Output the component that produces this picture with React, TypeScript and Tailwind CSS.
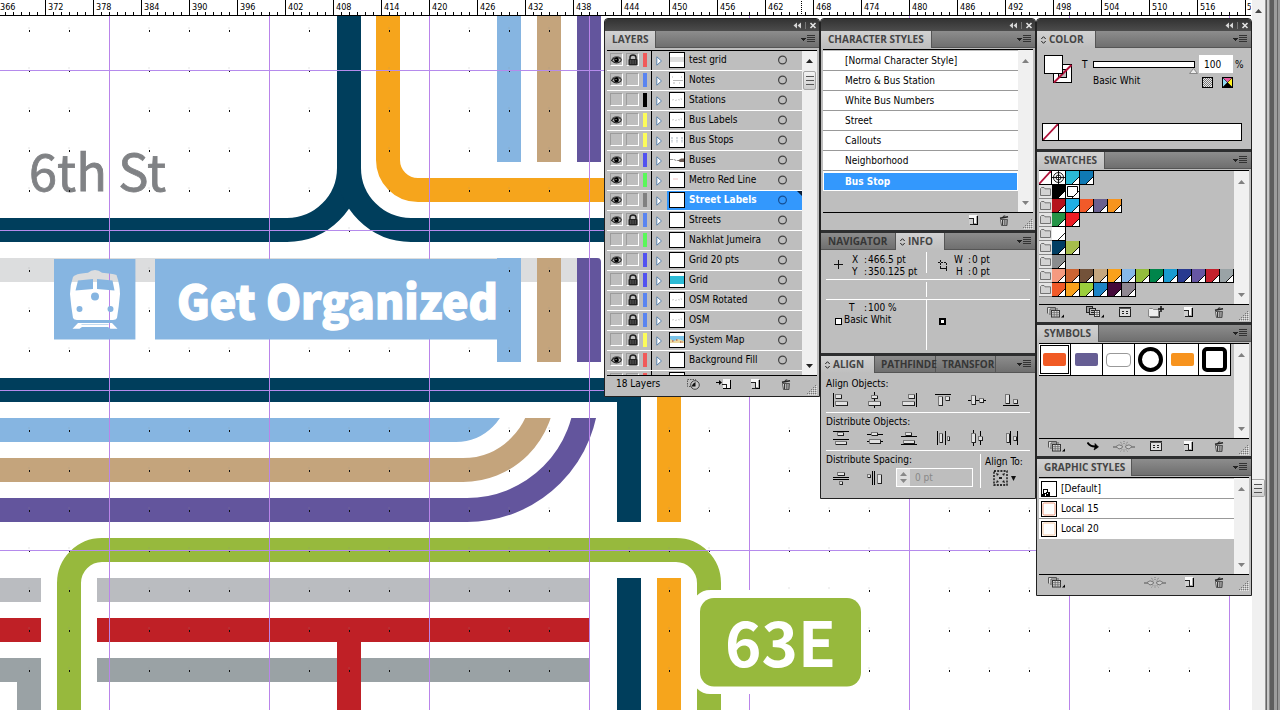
import React from "react";

const UI = "font-['DejaVu_Sans_Condensed','DejaVu_Sans',sans-serif] text-[10px]";

/* ---------- Ruler ---------- */

const majors = Array.from({ length: 27 }, (_, i) => ({ x: -3 + i * 48, n: 366 + i * 6 }));

function Ruler() {
  return (
    <div className="relative h-4 w-[1251px] shrink-0 overflow-hidden bg-white">
      <svg width="1251" height="16" shapeRendering="crispEdges" className="block">
        {Array.from({ length: 156 }, (_, i) => (
          <rect key={i} x={5 + i * 8} y="12" width="1" height="3" fill="#000" />
        ))}
        {majors.map((m) => (
          <rect key={m.n} x={m.x} y="0" width="1" height="15" fill="#000" />
        ))}
        <rect x="0" y="15" width="1251" height="1" fill="#000" />
        <line x1="801.5" x2="801.5" y1="1" y2="15" stroke="#000" strokeDasharray="1 1" />
      </svg>
      <svg width="1251" height="16" className="absolute left-0 top-0">
        {majors.slice(0, 26).map((m) => (
          <text key={m.n} x={m.x + 3} y="10" fontSize="9.5" textLength="15.5" lengthAdjust="spacingAndGlyphs" fontFamily="DejaVu Sans Condensed, DejaVu Sans, sans-serif">
            {m.n}
          </text>
        ))}
        <text x="1247" y="10" fontSize="9.5" textLength="4.5" lengthAdjust="spacingAndGlyphs" fontFamily="DejaVu Sans Condensed, DejaVu Sans, sans-serif">
          5
        </text>
      </svg>
    </div>
  );
}

/* ---------- Map artwork ---------- */

const NAVY = "#003e5c";
const ORANGE = "#f6a51c";
const SKY = "#86b5e1";
const TAN = "#c4a47c";
const PURPLE = "#63559d";
const GREEN = "#97b93d";
const RED = "#bf2026";
const guideX = [109, 269, 429, 589, 749, 909, 1069, 1229];
const guideY = [70, 230, 390, 550];
const dotX = Array.from({ length: 32 }, (_, i) => 29 + i * 40).filter((x) => !guideX.includes(x));
const dotY = Array.from({ length: 17 }, (_, i) => 30 + i * 40);
const MAPFONT = "Noto Sans CJK SC, Noto Sans CJK JP, sans-serif";

function Artwork() {
  return (
    <svg width="1252" height="694" viewBox="0 16 1252 694" className="block shrink-0">
      <defs>
        <clipPath id="below">
          <rect x="0" y="418" width="700" height="120" />
        </clipPath>
      </defs>
      <g shapeRendering="crispEdges">
        <rect x="0" y="258" width="600" height="24" fill="#dcddde" />
        <rect x="497" y="16" width="24" height="146" fill={SKY} />
        <rect x="537" y="16" width="24" height="146" fill={TAN} />
        <rect x="577" y="16" width="24" height="146" fill={PURPLE} />
        <rect x="497" y="258" width="24" height="104" fill={SKY} />
        <rect x="537" y="258" width="24" height="104" fill={TAN} />
        <rect x="657" y="380" width="24" height="142" fill={ORANGE} />
        <rect x="657" y="578" width="24" height="132" fill={ORANGE} />
        <rect x="0" y="578" width="41" height="24" fill="#babcc0" />
        <rect x="97" y="578" width="492" height="24" fill="#babcc0" />
        <rect x="0" y="658" width="41" height="24" fill="#9aa2a5" />
        <rect x="17" y="682" width="24" height="28" fill="#9aa2a5" />
        <rect x="97" y="658" width="492" height="24" fill="#9aa2a5" />
        <rect x="0" y="618" width="41" height="24" fill={RED} />
        <rect x="97" y="618" width="492" height="24" fill={RED} />
        <rect x="337" y="642" width="24" height="68" fill={RED} />
      </g>
      <path d="M577 258H597Q601 258 601 262V362H577Z" fill={PURPLE} />
      <g fill="none" strokeWidth="24">
        <path d="M388 16V160A30 30 0 0 0 418 190H606" stroke={ORANGE} />
        <g clipPath="url(#below)">
          <path d="M0 430H456A40 40 0 0 0 496 390" stroke={SKY} />
          <path d="M0 470H463A80 80 0 0 0 543 390" stroke={TAN} />
          <path d="M0 510H467A120 120 0 0 0 587 390" stroke={PURPLE} />
        </g>
        <path d="M69 710V583A33 33 0 0 1 102 550H676A33 33 0 0 1 709 583V710" stroke={GREEN} />
      </g>
      <text x="29" y="190.500" fontFamily={MAPFONT} fontSize="50" fontWeight="400" fill="#808285" stroke="#808285" strokeWidth="0.8" textLength="137" lengthAdjust="spacingAndGlyphs">
        6th St
      </text>
      <g shapeRendering="crispEdges">
        {dotY.map((y) =>
          dotX.map((x) => (
            <React.Fragment key={x + "-" + y}>
              <rect x={x} y={y} width="1" height="2" fill="#111" />
              <rect x={x - 1} y={y - 3} width="2" height="2" fill="#888" opacity="0.12" />
            </React.Fragment>
          ))
        )}
      </g>
      <g fill="none" stroke={NAVY} strokeWidth="24">
        <path d="M349 16V168A62 62 0 0 1 287 230H0" />
        <path d="M349 16V168A62 62 0 0 0 411 230H606" />
        <path d="M0 390H629V522" />
        <path d="M629 578V710" />
      </g>
      <rect x="349" y="230" width="1" height="2" fill="#111" />
      <g shapeRendering="crispEdges">
        {guideX.map((x) => (
          <rect key={x} x={x} y="16" width="1" height="694" fill="#ba84ea" />
        ))}
        {guideY.map((y) => (
          <rect key={y} x="0" y={y} width="1252" height="1" fill="#b58bec" />
        ))}
      </g>
      <path
        fill={SKY}
        fillRule="evenodd"
        d="M54 259H135.4V339.5H54Z M76 275Q78 273.500 88 272.800Q91 270 95 270Q99 270 102 272.800Q112 273.500 116.500 275Q120 285 120 294Q119 306 117 318Q116 320 113 320H77Q74 320 73 318Q71 306 70 294Q70 285 73 277Q74 275.500 76 275Z M78 280.500L93 279V289L75.500 290.500Z M97 279L112.500 280.500L114.500 290.500L97 289Z M91 296.500a4 4 0 1 0 8 0a4 4 0 1 0-8 0Z M76.500 309a3 3 0 1 0 6 0a3 3 0 1 0-6 0Z M107.500 309a3 3 0 1 0 6 0a3 3 0 1 0-6 0Z M78 323H112L117.500 328.800H110.500L108 327H82L79.500 328.800H72.500Z M81.500 324H108.500V324.600H81.500Z"
      />
      <rect x="155" y="259" width="344" height="80.500" fill={SKY} />
      <text x="177" y="319.300" fontFamily={MAPFONT} fontSize="46" fontWeight="900" fill="#fff" stroke="#fff" strokeWidth="1.3" textLength="321" lengthAdjust="spacingAndGlyphs">
        Get Organized
      </text>
      <rect x="692" y="590" width="176" height="104" rx="18" fill="#fff" />
      <rect x="700" y="598" width="161" height="88.500" rx="14" fill={GREEN} />
      <text x="725" y="667" fontFamily={MAPFONT} fontSize="62" fontWeight="700" fill="#fff" textLength="111" lengthAdjust="spacingAndGlyphs">
        63E
      </text>
    </svg>
  );
}

/* ---------- Window scroll bar ---------- */

function WindowEdge() {
  return (
    <div className="flex w-[28px] shrink-0">
      <div className="flex w-[13px] flex-col items-center bg-[#f0f0f0] pt-[9px]">
        <svg width="7" height="4" className="block">
          <path d="M3.500 0L7 4H0Z" fill="#444" />
        </svg>
        <div className="mt-[466px] flex h-[18px] w-[13px] flex-col items-center justify-center gap-[3px] rounded-r-[2px] border border-l-0 border-[#a5a5a5] bg-gradient-to-b from-[#f6f6f6] to-[#cfcfcf]">
          <div className="h-px w-[8px] bg-[#555]" />
          <div className="h-px w-[8px] bg-[#555]" />
          <div className="h-px w-[8px] bg-[#555]" />
        </div>
      </div>
      <div className="w-px bg-[#999]" />
      <div className="w-px bg-[#666]" />
      <div className="w-[2px] bg-[#c8c8c8]" />
      <div className="w-px bg-[#8a8a8a]" />
      <div className="w-[4px] bg-[#5e5e5e]" />
      <div className="w-[3px] bg-[#9c9c9c]" />
      <div className="w-px bg-[#666]" />
      <div className="w-[2px] bg-[#999]" />
    </div>
  );
}

/* ---------- Panel chrome ---------- */

function TitleBar() {
  return (
    <div className="flex h-[12px] shrink-0 items-center justify-end bg-gradient-to-b from-[#333] to-[#4c4c4c] pr-px">
      <svg width="26" height="9" viewBox="0 0 26 9" className="block">
        <path d="M4 1.500V7.500L0.500 4.500ZM8 1.500V7.500L4.500 4.500Z" fill="#d5d5d5" transform="translate(1 0)" />
        <path d="M13.500 1V8" stroke="#777" strokeWidth="1" />
        <path d="M18.500 2L23.500 7M23.500 2L18.500 7" stroke="#e2e2e2" strokeWidth="1.600" />
      </svg>
    </div>
  );
}

type Tab = { label: string; w: string; active?: boolean; arrow?: boolean };

function TabBar({ tabs }: { tabs: Tab[] }) {
  return (
    <div className="flex h-[17px] shrink-0 border-b border-[#555] bg-gradient-to-b from-[#8d8d8d] to-[#6f6f6f]">
      {tabs.map((t) => (
        <div
          key={t.label}
          className={
            "flex h-[17px] shrink-0 items-center whitespace-nowrap border-r border-[#555] font-['Open_Sans','Noto_Sans',sans-serif] text-[10px] font-bold leading-[17px] " +
            (t.active ? "bg-gradient-to-b from-[#d2d2d2] to-[#bebebe] text-[#444] " : "text-[#363636] ") +
            (t.arrow ? "pl-[4px] " : "") +
            t.w
          }
        >
          {t.arrow && (
            <svg width="5" height="8" viewBox="0 0 5 8" className="mr-[3px] block shrink-0">
              <path d="M0.300 3L2.500 0.700L4.700 3M0.300 5L2.500 7.300L4.700 5" fill="none" stroke="#222" />
            </svg>
          )}
          <span>{t.label}</span>
        </div>
      ))}
      <div className="flex flex-1 items-center justify-end pr-[4px]">
        <svg width="14" height="8" viewBox="0 0 14 8" className="block" shapeRendering="crispEdges">
          <path d="M0 3H5L2.500 6Z" fill="#222" />
          <path d="M6 0.500H14M6 2.500H14M6 4.500H14M6 6.500H14" stroke="#333" />
        </svg>
      </div>
    </div>
  );
}

function Divider() {
  return <div className="h-[3px] shrink-0 bg-[#2d2e2f]" />;
}

function Scroll({ active }: { active?: boolean }) {
  const c = active ? "#222" : "#808080";
  return (
    <div className={"flex w-[15px] shrink-0 flex-col items-center bg-[#f0f0f0] " + (active ? "pb-[7px] pt-[8px]" : "pb-[7px] pt-[9px]")}>
      <svg width="7" height="4" className="block">
        <path d="M3.500 0L7 4H0Z" fill={c} />
      </svg>
      {active && (
        <div className="mt-[8px] flex h-[19px] w-[13px] shrink-0 flex-col items-center justify-center gap-[3px] rounded-[2px] border border-[#a5a5a5] bg-gradient-to-b from-[#f4f4f4] to-[#cccccc]">
          <div className="h-px w-[8px] bg-[#555]" />
          <div className="h-px w-[8px] bg-[#555]" />
          <div className="h-px w-[8px] bg-[#555]" />
        </div>
      )}
      <div className="flex-1" />
      <svg width="7" height="4" className="block">
        <path d="M0 0H7L3.500 4Z" fill={c} />
      </svg>
    </div>
  );
}

/* ---------- Footer glyphs ---------- */

function NewGlyph() {
  return (
    <svg width="10" height="10" viewBox="0 0 10 10" shapeRendering="crispEdges" className="block">
      <rect x="1" y="0" width="8" height="9" fill="#fafafa" />
      <path d="M9.500 1V9.500H3" fill="none" stroke="#000" />
      <path d="M8.500 1V8.500H5" fill="none" stroke="#aaa" />
      <rect x="1" y="4" width="4" height="5" fill="#d0d0d0" />
      <path d="M1 3.500H5.500V9.500H2" fill="none" stroke="#222" />
    </svg>
  );
}
function TrashGlyph() {
  return (
    <svg width="10" height="11" viewBox="0 0 10 11" className="block">
      <path d="M1 3.200L9 1.700" stroke="#222" strokeWidth="1.500" />
      <path d="M3.800 1.500L6.200 0.800" stroke="#222" />
      <path d="M1.500 4.500H8.500L8 10.500H2.500Z" fill="#eee" stroke="#333" strokeWidth="0.800" />
      <path d="M3.500 5V10M5.200 5V10M7 5V10" stroke="#222" strokeWidth="0.900" />
    </svg>
  );
}
function GripGlyph() {
  const pts: number[][] = [];
  for (let r = 0; r < 5; r++) for (let c = 4 - r; c < 5; c++) pts.push([c * 2, r * 2]);
  return (
    <svg width="10" height="10" shapeRendering="crispEdges" className="block">
      {pts.map(([x, y]) => (
        <React.Fragment key={x + "." + y}>
          <rect x={x} y={y} width="1" height="1" fill="#777" />
          <rect x={x + 1} y={y + 1} width="1" height="1" fill="#e6e6e6" />
        </React.Fragment>
      ))}
    </svg>
  );
}
function LibraryGlyph() {
  return (
    <svg width="18" height="12" viewBox="0 0 18 12" className="block">
      <path d="M0.500 7.500V1.500H8.500V4M3 9V3H11" fill="#ddd" stroke="#555" />
      <rect x="4.500" y="4.500" width="8" height="6.500" fill="#ddd" stroke="#333" />
      <path d="M4.500 6.700H12.500M4.500 8.800H12.500M7.200 4.500V11M9.900 4.500V11" stroke="#666" strokeWidth="0.800" />
      <path d="M17 8.500V11.500H14Z" fill="#000" />
    </svg>
  );
}
function KindGlyph() {
  return (
    <svg width="19" height="12" viewBox="0 0 19 12" className="block">
      <rect x="0.500" y="0.500" width="6" height="6" fill="#999" stroke="#222" />
      <rect x="3.500" y="2.500" width="6" height="6" fill="#bbb" stroke="#222" />
      <path d="M5 4.500H10M5 6.500H10" stroke="#222" />
      <rect x="8.500" y="4.500" width="5" height="6" fill="#eee" stroke="#333" />
      <path d="M9 6.500H13M9 8.500H13M11 5V10" stroke="#555" strokeWidth="0.700" />
      <path d="M18 8.500V11.500H15Z" fill="#000" />
    </svg>
  );
}
function OptionsGlyph() {
  return (
    <svg width="12" height="10" viewBox="0 0 12 10" shapeRendering="crispEdges" className="block">
      <rect x="0.500" y="0.500" width="11" height="9" fill="#ddd" stroke="#222" />
      <path d="M0 1.500H12" stroke="#555" />
      <path d="M3 4.500H5M7 4.500H9M3 6.500H5M7 6.500H9" stroke="#222" />
    </svg>
  );
}
function FolderPlusGlyph() {
  return (
    <svg width="16" height="12" viewBox="0 0 16 12" className="block">
      <path d="M0.500 10.500V3.500L1.500 2.500H4.500L5.500 3.500H10.500V10.500Z" fill="#eee" stroke="#888" />
      <path d="M11.500 5V11.300H2" fill="none" stroke="#333" />
      <path d="M13 0V6M10 3H16" stroke="#111" strokeWidth="1.500" />
    </svg>
  );
}
function BreakGlyph() {
  return (
    <svg width="22" height="12" viewBox="0 0 22 12" className="block">
      <path d="M0 7H4M18 7H22" stroke="#777" strokeWidth="1.500" />
      <path d="M3 6.500L6 4.800L9.500 6L9 8L6 9Z" fill="#ccc" stroke="#777" />
      <path d="M19 6.500L16 4.800L12.500 6L13 8L16 9Z" fill="#ccc" stroke="#777" />
      <path d="M9 4.500L7 1M11 4V0.500M13 4.500L15 1M9 9.500L7.500 11.500M11 9.500V12M13 9.500L14.500 11.500" stroke="#777" strokeDasharray="1 1" />
    </svg>
  );
}
function PlaceGlyph() {
  return (
    <svg width="12" height="9" viewBox="0 0 12 9" className="block">
      <path d="M0.500 0.500Q3 4.500 8 4.500" fill="none" stroke="#000" strokeWidth="1.800" />
      <path d="M8 1.500L11.500 5L7 8L8 4.800Z" fill="#000" stroke="#000" strokeWidth="0.600" />
    </svg>
  );
}
function MaskGlyph() {
  return (
    <svg width="13" height="11" viewBox="0 0 13 11" className="block">
      <rect x="0.500" y="0.500" width="8" height="7" fill="none" stroke="#555" strokeDasharray="1.500 1" />
      <circle cx="8" cy="6" r="4.300" fill="#c8c8c8" stroke="#444" />
      <path d="M8.500 3V7.500H4.500Q5.500 4 8.500 3Z" fill="#111" />
    </svg>
  );
}
function SubLayerGlyph() {
  return (
    <svg width="15" height="10" viewBox="0 0 15 10" className="block">
      <path d="M0 3.500H4" stroke="#000" />
      <path d="M3 1L6 3.500L3 6Z" fill="#000" />
      <g shapeRendering="crispEdges">
        <rect x="7" y="0" width="7" height="9" fill="#f6f6f6" />
        <path d="M14.500 1V9.500H7" fill="none" stroke="#000" />
        <path d="M6 5.500H10.500V9" fill="none" stroke="#222" />
      </g>
    </svg>
  );
}

/* ---------- Layers ---------- */

type Layer = { name: string; eye?: boolean; lock?: boolean; color: string; art?: string; sel?: boolean };
const layers: Layer[] = [
  { name: "test grid", eye: true, lock: true, color: "bg-[#f15a5a]", art: "band" },
  { name: "Notes", eye: true, color: "bg-[#5a84f1]", art: "notes" },
  { name: "Stations", color: "bg-black", art: "faint" },
  { name: "Bus Labels", eye: true, color: "bg-[#fcfc5a]", art: "faint" },
  { name: "Bus Stops", color: "bg-[#fcfc5a]", art: "stops" },
  { name: "Buses", eye: true, color: "bg-[#5252f0]", art: "buses" },
  { name: "Metro Red Line", eye: true, color: "bg-[#5af85a]", art: "red" },
  { name: "Street Labels", eye: true, color: "bg-[#808080]", sel: true },
  { name: "Streets", eye: true, lock: true, color: "bg-[#5a84f1]" },
  { name: "Nakhlat Jumeira", color: "bg-[#5af85a]" },
  { name: "Grid 20 pts", eye: true, color: "bg-[#5252f0]" },
  { name: "Grid", lock: true, color: "bg-[#5252f0]", art: "grid" },
  { name: "OSM Rotated", lock: true, color: "bg-[#5a84f1]", art: "faint" },
  { name: "OSM", lock: true, color: "bg-[#5a84f1]", art: "faint" },
  { name: "System Map", lock: true, color: "bg-[#fcfc5a]", art: "map" },
  { name: "Background Fill", eye: true, lock: true, color: "bg-[#f15a5a]" },
  { name: "", color: "bg-[#f15a5a]" },
];

function Thumb({ art }: { art?: string }) {
  return (
    <svg width="16" height="16" viewBox="0 0 16 16" className="block shrink-0">
      <rect x="0.500" y="0.500" width="15" height="15" fill="#fff" stroke="#000" />
      {art === "band" && <rect x="1" y="5" width="14" height="5" fill="#dedede" />}
      {art === "notes" && <path d="M3 5H4M4 8.500H14M4 11H6M10 11H11M12 5H13" stroke="#888" strokeWidth="0.600" />}
      {art === "faint" && <path d="M3 8L5 7.500M6 8.500L8 8M9 7.500L11 8M12 6L12.500 8" fill="none" stroke="#bbb" strokeWidth="0.700" />}
      {art === "stops" && <path d="M3 5V11M8 5V11M13 5V11" stroke="#b5bfc9" strokeWidth="1.200" strokeDasharray="2 0.700" />}
      {art === "buses" && (
        <g>
          <path d="M1 7.500H5L7 8.500H11" fill="none" stroke="#888" strokeWidth="0.900" strokeDasharray="3 0.600" />
          <path d="M9 8.500L12 6.500H15V10H11Z" fill="#6b5a52" />
        </g>
      )}
      {art === "red" && <path d="M4 7H9" stroke="#efb5b5" strokeWidth="0.800" />}
      {art === "grid" && <rect x="1" y="4" width="14" height="8" fill="#2cbbd6" />}
      {art === "map" && (
        <g>
          <rect x="1" y="4" width="14" height="5" fill="#7cc4e8" />
          <path d="M1 7L5 9L9 7L15 9V11H1Z" fill="#ecd9a0" />
          <path d="M3 9H5M7 8H9M11 10H14" stroke="#b0402c" strokeWidth="1.200" strokeDasharray="1 0.500" />
        </g>
      )}
    </svg>
  );
}

function Eye() {
  return (
    <svg width="12" height="10" viewBox="0 0 12 10" className="block">
      <path d="M0.500 5.500Q5.500 0 11 4Q11.500 5 10.500 6.500Q5.500 10.500 0.500 5.500Z" fill="#bbb" stroke="#222" strokeWidth="1.100" />
      <path d="M1 3.500Q6 -0.500 11 3" fill="none" stroke="#333" strokeWidth="0.900" />
      <circle cx="6" cy="5" r="2.600" fill="#000" />
      <circle cx="5.500" cy="4.500" r="0.600" fill="#ddd" />
    </svg>
  );
}

function Lock() {
  return (
    <svg width="10" height="12" viewBox="0 0 10 12" className="block">
      <path d="M2 6V3.500Q2 1 5 1Q8 1 8 3.500V6" fill="none" stroke="#222" strokeWidth="1.500" />
      <rect x="0.500" y="5" width="9" height="6.500" rx="1" fill="#222" />
      <path d="M2 7H8M2 9H8" stroke="#888" strokeWidth="0.800" strokeDasharray="1.500 0.800" />
    </svg>
  );
}

function Cell({ children }: { children?: React.ReactNode }) {
  return (
    <div className="flex h-[13px] w-[13px] shrink-0 items-center justify-center border border-b-white border-l-[#9c9c9c] border-r-white border-t-[#9c9c9c]">
      {children}
    </div>
  );
}

function LayerRow({ l }: { l: Layer }) {
  return (
    <div className="flex h-[20px] shrink-0 border-b border-white bg-[#bebebe]">
      <div className="flex w-[45px] shrink-0 border-r border-black pl-[3px] pt-[2px]">
        <Cell>{l.eye && <Eye />}</Cell>
        <div className="w-[3px]" />
        <Cell>{l.lock && <Lock />}</Cell>
        <div className={"ml-[4px] h-[14px] w-[4px] " + l.color} />
      </div>
      <div className="flex w-[15px] shrink-0 items-center pl-[4px]">
        <svg width="7" height="10" viewBox="0 0 7 10" className="block">
          <path d="M0.800 0.800L5.500 5L0.800 9.200Z" fill="#fff" stroke="#5b84ad" strokeWidth="1" />
        </svg>
      </div>
      <div className={"relative flex flex-1 items-start pl-[2px] pt-px " + (l.sel ? "bg-[#3398fd] font-bold text-white" : "text-black")}>
        <Thumb art={l.art} />
        <span className="ml-[4px] w-[88px] whitespace-nowrap leading-[16px]">{l.name}</span>
        <svg width="10" height="10" viewBox="0 0 10 10" className="mt-[3px] block">
          <circle cx="5.500" cy="5" r="3.900" fill="none" stroke={l.sel ? "#144e94" : "#444"} strokeWidth="1.200" />
        </svg>
        {l.sel && (
          <svg width="5" height="5" className="absolute right-0 top-0">
            <path d="M0 0H5V5Z" fill="#0b1c33" />
          </svg>
        )}
      </div>
    </div>
  );
}

function LayersPanel() {
  return (
    <div className={"absolute left-[604px] top-[18px] flex h-[379px] w-[216px] flex-col overflow-hidden rounded-t-[4px] border border-[#222] bg-[#bebebe] " + UI}>
      <TitleBar />
      <TabBar tabs={[{ label: "LAYERS", w: "w-[51px] pl-[7px]", active: true }]} />
      <div className="mx-[2px] mt-[2px] flex h-[326px] shrink-0 border-y border-black">
        <div className="flex w-[195px] flex-col overflow-hidden">
          {layers.map((l, i) => (
            <LayerRow key={i} l={l} />
          ))}
        </div>
        <Scroll active />
      </div>
      <div className="flex h-[20px] items-center pb-[4px] pl-[11px]">
        <span className="w-[71px] pb-px leading-none">18 Layers</span>
        <MaskGlyph />
        <div className="ml-[16px]"><SubLayerGlyph /></div>
        <div className="ml-[19px]"><NewGlyph /></div>
        <div className="ml-[21px]"><TrashGlyph /></div>
        <div className="ml-auto mr-[2px] translate-y-[3px] self-end"><GripGlyph /></div>
      </div>
    </div>
  );
}

/* ---------- Middle dock ---------- */

const charStyles = ["[Normal Character Style]", "Metro & Bus Station", "White Bus Numbers", "Street", "Callouts", "Neighborhood"];

function Bars({ d, lines }: { d: number[][]; lines: string }) {
  return (
    <svg width="18" height="16" viewBox="0 0 18 16" shapeRendering="crispEdges" className="block shrink-0">
      <path d={lines} stroke="#000" fill="none" />
      {d.map(([x, y, w, h], i) => (
        <g key={i}>
          <rect x={x + 0.5} y={y + 0.5} width={w - 1} height={h - 1} fill="#e2e2e2" stroke="#777" />
          <path d={`M${x + w - 0.5} ${y + 1}V${y + h - 0.5}H${x + 1}`} stroke="#222" fill="none" />
        </g>
      ))}
    </svg>
  );
}

const alignIcons = [
  { lines: "M1.500 1V15", d: [[3, 2, 7, 5], [3, 9, 13, 5]] },
  { lines: "M8.500 0V16", d: [[5, 3, 7, 4], [2, 9, 13, 5]] },
  { lines: "M16.500 1V15", d: [[8, 2, 7, 5], [2, 9, 13, 5]] },
  { lines: "M1 2.500H17", d: [[4, 4, 5, 10], [11, 4, 5, 5]] },
  { lines: "M0 8.500H18", d: [[3, 3, 5, 10], [11, 6, 5, 5]] },
  { lines: "M1 13.500H17", d: [[3, 2, 5, 10], [11, 7, 5, 5]] },
];
const distIcons = [
  { lines: "M1 1.500H17M1 9.500H17", d: [[5, 2, 7, 4], [3, 11, 12, 4]] },
  { lines: "M1 4.500H17M1 11.500H17", d: [[5, 2, 7, 4], [3, 9, 12, 5]] },
  { lines: "M1 6.500H17M1 14.500H17", d: [[5, 2, 7, 4], [3, 10, 12, 4]] },
  { lines: "M3.500 1V15M11.500 1V15", d: [[5, 3, 4, 10], [13, 6, 3, 5]] },
  { lines: "M5.500 0V16M12.500 1V15", d: [[3, 3, 5, 10], [10, 6, 5, 5]] },
  { lines: "M8.500 1V15M15.500 1V15", d: [[4, 3, 4, 10], [11, 6, 4, 5]] },
];

function Reading({ k, v, w }: { k: string; v: string; w: string }) {
  return (
    <div className="flex whitespace-nowrap">
      <span className={w}>{k}</span>
      <span className="w-[4px]">:</span>
      <span>{v}</span>
    </div>
  );
}

function MiddleDock() {
  return (
    <div className={"absolute left-[820px] top-[18px] flex h-[481px] w-[216px] flex-col overflow-hidden rounded-t-[4px] border border-[#222] bg-[#bebebe] " + UI}>
      <TitleBar />
      <TabBar tabs={[{ label: "CHARACTER STYLES", w: "w-[111px] pl-[7px]", active: true }]} />
      <div className="mx-[2px] mt-px flex h-[164px] shrink-0 border-y border-black">
        <div className="flex w-[195px] flex-col pt-px">
          {charStyles.map((s) => (
            <div key={s} className="flex h-[20px] items-center border-b border-[#999] bg-white pl-[22px]">
              {s}
            </div>
          ))}
          <div className="flex h-[20px] items-center border border-white border-t-2 bg-[#3398fd] pl-[21px] pb-px font-bold text-white">Bus Stop</div>
        </div>
        <Scroll />
      </div>
      <div className="flex h-[17px] shrink-0 items-center pb-[3px] pl-[147px]">
        <NewGlyph />
        <div className="ml-[21px]"><TrashGlyph /></div>
        <div className="ml-auto mr-[2px] translate-y-[2px] self-end"><GripGlyph /></div>
      </div>
      <Divider />

      <TabBar tabs={[{ label: "NAVIGATOR", w: "w-[75px] pl-[7px]" }, { label: "INFO", w: "w-[49px]", active: true, arrow: true }]} />
      <div className="flex h-[103px] shrink-0 flex-col px-[5px] pt-[2px]">
        <div className="flex h-[28px] border-b border-white">
          <div className="mb-[6px] flex w-[101px] items-center border-r border-white pl-[8px]">
            <svg width="10" height="10" shapeRendering="crispEdges" className="mt-[4px] block">
              <path d="M0 4.500H9M4.500 0V9" stroke="#111" />
            </svg>
            <div className="ml-[8px] mt-[6px] leading-[12px]">
              <Reading k="X" v="466.5 pt" w="w-[12px]" />
              <Reading k="Y" v="350.125 pt" w="w-[12px]" />
            </div>
          </div>
          <div className="flex flex-1 items-center pl-[11px]">
            <svg width="10" height="11" shapeRendering="crispEdges" className="block">
              <path d="M2.500 0V9M0 2.500H8.500V11" fill="none" stroke="#111" strokeDasharray="2 1" />
              <path d="M2 8.500H9" stroke="#111" />
            </svg>
            <div className="ml-[6px] leading-[12px]">
              <Reading k="W" v="0 pt" w="w-[14px]" />
              <Reading k="H" v="0 pt" w="w-[14px] pl-[2px]" />
            </div>
          </div>
        </div>
        <div className="flex h-[20px] border-b border-white">
          <div className="my-[2px] w-[101px] border-r border-white" />
        </div>
        <div className="flex h-[50px]">
          <div className="w-[101px] border-r border-white pl-[9px] pt-[2px] leading-[12px]">
            <div className="pl-[14px]"><Reading k="T" v="100 %" w="w-[15px]" /></div>
            <div className="flex items-center">
              <div className="mt-[2px] h-[7px] w-[7px] border border-black bg-white" />
              <span className="ml-[2px]">Basic Whit</span>
            </div>
          </div>
          <div className="ml-[12px] mt-[18px] h-[7px] w-[7px] border-2 border-black bg-white" />
        </div>
      </div>
      <Divider />

      <TabBar
        tabs={[
          { label: "ALIGN", w: "w-[54px]", active: true, arrow: true },
          { label: "PATHFINDE", w: "w-[61px] pl-[6px] tracking-[-0.1px]" },
          { label: "TRANSFOR", w: "w-[60px] pl-[6px] tracking-[-0.1px]" },
        ]}
      />
      <div className="flex flex-1 flex-col px-[5px] pt-[5px] leading-[12px]">
        <div>Align Objects:</div>
        <div className="mt-[1px] flex h-[22px] items-start gap-[16px] border-b border-white pl-[6px] pt-[1px]">
          {alignIcons.map((a, i) => <Bars key={i} d={a.d} lines={a.lines} />)}
        </div>
        <div className="mt-[3px]">Distribute Objects:</div>
        <div className="mt-[1px] flex h-[22px] items-start gap-[16px] border-b border-white pl-[6px] pt-[1px]">
          {distIcons.map((a, i) => <Bars key={i} d={a.d} lines={a.lines} />)}
        </div>
        <div className="mt-[3px] flex">
          <div className="w-[155px] border-r border-white pb-[1px]">
            <div className="whitespace-nowrap">Distribute Spacing:</div>
            <div className="mt-[2px] flex h-[19px] items-center pl-[6px]">
              <Bars lines="M1 7.500H17M1 9.500H17" d={[[5, 2, 8, 4], [7, 11, 4, 4]]} />
              <div className="ml-[15px]"><Bars lines="M7.500 1V15M9.500 1V15" d={[[2, 4, 4, 4], [12, 4, 5, 10]]} /></div>
              <div className="ml-[13px] flex h-[19px] w-[77px] shrink-0 border border-white text-[#888]">
                <div className="flex w-[13px] flex-col items-center justify-center gap-[3px] bg-[#ddd]">
                  <svg width="7" height="4" className="block"><path d="M3.500 0L7 4H0Z" fill="#888" /></svg>
                  <svg width="7" height="4" className="block"><path d="M0 0H7L3.500 4Z" fill="#888" /></svg>
                </div>
                <span className="pl-[5px] leading-[18px]">0 pt</span>
              </div>
            </div>
          </div>
          <div className="pl-[4px] pt-[2px]">
            <div className="whitespace-nowrap">Align To:</div>
            <div className="mt-[2px] flex items-center pl-[8px]">
              <svg width="15" height="16" viewBox="0 0 15 16" className="block">
                <rect x="1" y="1" width="13" height="14" fill="none" stroke="#000" strokeWidth="1.300" strokeDasharray="2 1.200" />
                <path d="M3 3L6 4L4 6ZM12 3L9 4L11 6ZM3 13L6 12L4 10ZM12 13L9 12L11 10ZM6 7H9V9H6Z" fill="#222" />
              </svg>
              <svg width="5" height="5" className="ml-[3px] block"><path d="M0 0H5L2.500 5Z" fill="#111" /></svg>
            </div>
          </div>
        </div>
      </div>
    </div>
  );
}

/* ---------- Right dock ---------- */

function NoneSlash({ w, h }: { w: number; h: number }) {
  return (
    <svg width={w} height={h} className="block shrink-0 bg-white">
      <path d={`M0 ${h}L${w} 0`} stroke="#b0123a" strokeWidth="1.800" />
    </svg>
  );
}

function Swatch({ c }: { c: string }) {
  return (
    <svg width="14" height="14" shapeRendering="crispEdges" className="block shrink-0">
      <rect width="14" height="14" fill="#000" />
      {c === "reg" ? (
        <g shapeRendering="auto">
          <rect width="13" height="13" fill="#fff" />
          <circle cx="6.500" cy="6.500" r="5" fill="none" stroke="#000" strokeWidth="0.900" />
          <circle cx="6.500" cy="6.500" r="2.500" fill="none" stroke="#000" strokeWidth="0.900" />
          <path d="M0 6.500H13M6.500 0V13" stroke="#000" strokeWidth="0.900" />
        </g>
      ) : (
        <g>
          <rect width="13" height="13" fill={c === "sel" ? "#fff" : c} />
          <path d="M13 6V13H6Z" fill="#fff" />
          <path d="M6 13L13 6" stroke="#000" strokeWidth="0.900" shapeRendering="auto" />
          {c === "sel" && <path d="M1.500 1.500H11.500V7.500L7.500 11.500H1.500Z" fill="#fff" stroke="#000" shapeRendering="auto" />}
        </g>
      )}
    </svg>
  );
}

function Folder() {
  return (
    <div className="flex h-[14px] w-[13px] shrink-0 items-center justify-center border-b border-[#888] bg-[#e4e4e4]">
      <svg width="11" height="9" viewBox="0 0 11 9" className="block">
        <path d="M0.500 8.500V1.500L1.500 0.500H4L5 1.800H10.500V8.500Z" fill="#d2d2d2" stroke="#666" strokeWidth="0.900" />
      </svg>
    </div>
  );
}

const swatchRows = [
  ["reg", "#2bb8d4", "#0f79b4"],
  ["#000000", "sel"],
  ["#b5121b", "#1fb0e6", "#f15a29", "#6a6090", "#f7941e"],
  ["#259447", "#ed1c24"],
  ["#ffffff"],
  ["#003e63", "#a6bd4c"],
  ["#8a8c8e"],
  ["#f59a80", "#cc6432", "#735239", "#c6a77f", "#f9a11b", "#86b8e8", "#93bd3c", "#00854b", "#1a9bd0", "#283a90", "#6656a2", "#c4202c", "#9aa3a6"],
  ["#f15a29", "#f9a11b", "#9bcf3c", "#1c84c6", "#44093a", "#8f8791"],
];

function SymbolCell({ sel, children }: { sel?: boolean; children: React.ReactNode }) {
  return (
    <div className="flex h-[32px] w-[32px] shrink-0 items-center justify-center border-b border-r border-black bg-white">
      <div className={"flex h-[29px] w-[29px] items-center justify-center " + (sel ? "border border-black" : "")}>{children}</div>
    </div>
  );
}

function RightDock() {
  return (
    <div className={"absolute left-[1036px] top-[18px] flex h-[578px] w-[216px] flex-col overflow-hidden rounded-t-[4px] border border-[#222] bg-[#bebebe] " + UI}>
      <TitleBar />
      <TabBar tabs={[{ label: "COLOR", w: "w-[59px]", active: true, arrow: true }]} />
      <div className="flex h-[101px] shrink-0 flex-col pl-[5px] pt-[7px]">
        <div className="flex h-[69px]">
          <div className="w-[40px] pl-[2px]">
            <svg width="29" height="29" viewBox="0 0 29 29" className="block">
              <rect x="9.500" y="9.500" width="18" height="18" fill="#fff" stroke="#000" />
              <rect x="14.500" y="14.500" width="8" height="8" fill="#bebebe" stroke="#000" />
              <path d="M10 27.500L27.500 10" stroke="#b0123a" strokeWidth="2" />
              <rect x="0.500" y="0.500" width="18" height="18" fill="#fff" stroke="#000" />
            </svg>
          </div>
          <div className="w-[11px] pt-[4px] leading-[12px]">T</div>
          <div className="w-[106px]">
            <div className="mt-[6px] h-[7px] w-[102px] border border-black bg-white" />
            <svg width="9" height="6" className="ml-[96px] block"><path d="M4.500 0.500L8.500 5.500H0.500Z" fill="#eee" stroke="#888" /></svg>
            <div className="mt-[1px] leading-[12px]">Basic Whit</div>
          </div>
          <div className="w-[48px]">
            <div className="flex">
              <div className="h-[18px] w-[34px] bg-white pl-[5px] leading-[19px]">100</div>
              <span className="ml-[2px] leading-[19px]">%</span>
            </div>
            <div className="mt-[3px] flex gap-[9px] pl-[3px]">
              <svg width="11" height="11" shapeRendering="crispEdges" className="block">
                <rect x="0.500" y="0.500" width="10" height="10" fill="#e8e8e8" stroke="#000" />
                {Array.from({ length: 40 }, (_, i) => (
                  <rect key={i} x={1 + ((i * 2) % 9)} y={1 + Math.floor((i * 2) / 9)} width="1" height="1" fill="#777" />
                ))}
              </svg>
              <svg width="11" height="11" className="block">
                <path d="M0 0H11L5.500 5.500Z" fill="#e85aa0" />
                <path d="M0 0V11L5.500 5.500Z" fill="#8fd8f0" />
                <path d="M11 0V11L5.500 5.500Z" fill="#fff21f" />
                <path d="M0 11H11L5.500 5.500Z" fill="#000" />
                <path d="M0 0L11 11M11 0L0 11" stroke="#000" strokeWidth="0.600" />
                <rect x="0.500" y="0.500" width="10" height="10" fill="none" stroke="#000" />
              </svg>
            </div>
          </div>
        </div>
        <div className="-mt-px flex h-[18px] w-[200px] border border-black bg-white">
          <NoneSlash w={15} h={16} />
          <div className="w-px bg-black" />
        </div>
      </div>
      <Divider />

      <TabBar tabs={[{ label: "SWATCHES", w: "w-[68px] pl-[7px]", active: true }]} />
      <div className="mx-[2px] mt-px flex h-[135px] shrink-0 border-y border-black">
        <div className="w-[195px]">
          {swatchRows.map((r, i) => (
            <div key={i} className="flex h-[14px]">
              {i === 0 ? (
                <div className="h-[14px] w-[13px] shrink-0 border-b border-r border-black"><NoneSlash w={12} h={13} /></div>
              ) : (
                <Folder />
              )}
              {r.map((c, j) => (
                <Swatch key={j} c={c} />
              ))}
            </div>
          ))}
        </div>
        <Scroll />
      </div>
      <div className="flex h-[17px] shrink-0 items-center pb-[3px] pl-[10px]">
        <LibraryGlyph />
        <div className="ml-[21px]"><KindGlyph /></div>
        <div className="ml-[14px]"><OptionsGlyph /></div>
        <div className="ml-[17px]"><FolderPlusGlyph /></div>
        <div className="ml-[19px]"><NewGlyph /></div>
        <div className="ml-[21px]"><TrashGlyph /></div>
        <div className="ml-auto mr-[2px] translate-y-[2px] self-end"><GripGlyph /></div>
      </div>
      <Divider />

      <TabBar tabs={[{ label: "SYMBOLS", w: "w-[62px] pl-[7px]", active: true }]} />
      <div className="mx-[2px] mt-px flex h-[96px] shrink-0 border-y border-black">
        <div className="flex w-[195px]">
          <SymbolCell sel><div className="h-[13px] w-[23px] rounded-[2px] bg-[#f15a24]" /></SymbolCell>
          <SymbolCell><div className="h-[13px] w-[23px] rounded-[2px] bg-[#665e94]" /></SymbolCell>
          <SymbolCell><div className="h-[14px] w-[25px] rounded-[4px] border border-[#999] bg-white" /></SymbolCell>
          <SymbolCell><div className="h-[25px] w-[25px] rounded-full border-[4px] border-black bg-white" /></SymbolCell>
          <SymbolCell><div className="h-[13px] w-[23px] rounded-[2px] bg-[#f7931e]" /></SymbolCell>
          <SymbolCell><div className="h-[25px] w-[25px] rounded-[5px] border-[4px] border-black bg-white" /></SymbolCell>
        </div>
        <Scroll />
      </div>
      <div className="flex h-[17px] shrink-0 items-center pb-[3px] pl-[11px]">
        <LibraryGlyph />
        <div className="ml-[21px]"><PlaceGlyph /></div>
        <div className="ml-[14px]"><BreakGlyph /></div>
        <div className="ml-[15px]"><OptionsGlyph /></div>
        <div className="ml-[21px]"><NewGlyph /></div>
        <div className="ml-[21px]"><TrashGlyph /></div>
        <div className="ml-auto mr-[2px] translate-y-[2px] self-end"><GripGlyph /></div>
      </div>
      <Divider />

      <TabBar tabs={[{ label: "GRAPHIC STYLES", w: "w-[95px] pl-[7px]", active: true }]} />
      <div className="mx-[2px] mt-px flex h-[98px] shrink-0 border-y border-black">
        <div className="w-[195px] pt-px">
          <div className="flex h-[20px] items-center border-b border-[#999] bg-white pl-[2px]">
            <svg width="16" height="16" shapeRendering="crispEdges" className="block">
              <rect x="0.500" y="0.500" width="15" height="15" fill="#fff" stroke="#000" />
              <rect x="2.500" y="8.500" width="4" height="4" fill="#fff" stroke="#000" />
              <rect x="5" y="11" width="4" height="4" fill="#000" />
              <rect x="6" y="12" width="1" height="1" fill="#fff" />
              <rect x="1" y="13" width="3" height="2" fill="#000" />
            </svg>
            <span className="ml-[4px]">[Default]</span>
          </div>
          <div className="flex h-[20px] items-center border-b border-[#999] bg-white pl-[2px]">
            <svg width="16" height="16" className="block">
              <rect x="0.500" y="0.500" width="15" height="15" fill="#fff" stroke="#000" />
              <rect x="2" y="2" width="12" height="12" rx="1.500" fill="none" stroke="#ee9a7e" />
            </svg>
            <span className="ml-[4px]">Local 15</span>
          </div>
          <div className="flex h-[20px] items-center bg-white pb-px pl-[2px]">
            <svg width="16" height="16" className="block">
              <rect x="0.500" y="0.500" width="15" height="15" fill="#fff" stroke="#000" />
              <rect x="2" y="2" width="12" height="12" rx="1.500" fill="none" stroke="#f5cba6" />
            </svg>
            <span className="ml-[4px]">Local 20</span>
          </div>
        </div>
        <Scroll />
      </div>
      <div className="flex h-[20px] shrink-0 items-center pb-[6px] pl-[11px]">
        <LibraryGlyph />
        <div className="ml-[78px]"><BreakGlyph /></div>
        <div className="ml-[18px]"><NewGlyph /></div>
        <div className="ml-[20px]"><TrashGlyph /></div>
        <div className="ml-auto mr-[2px] translate-y-[2px] self-end"><GripGlyph /></div>
      </div>
    </div>
  );
}

export default function App() {
  return (
    <div className="relative flex h-[710px] w-[1280px] overflow-hidden bg-white text-black">
      <div className="flex w-[1252px] shrink-0 flex-col">
        <Ruler />
        <Artwork />
      </div>
      <WindowEdge />
      <LayersPanel />
      <MiddleDock />
      <RightDock />
    </div>
  );
}
